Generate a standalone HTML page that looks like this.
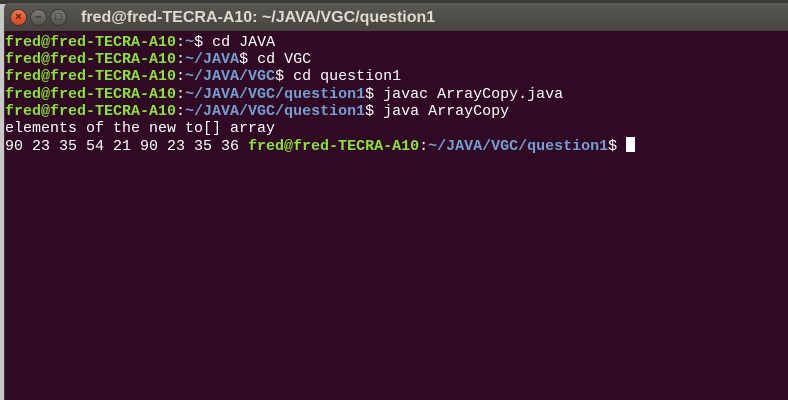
<!DOCTYPE html>
<html><head><style>
body{margin:0;width:788px;height:400px;overflow:hidden;background:#c8c8c6;position:relative;font-family:"Liberation Mono",monospace}
.top{position:absolute;left:0;top:0;width:788px;height:4px;background:#3a3935}
.title{position:absolute;left:4px;top:3px;width:784px;height:28px;background:linear-gradient(#5a5852,#45443e);border-radius:5px 0 0 0}
.btn{position:absolute;top:6px;width:17px;height:17px;border-radius:50%;background:linear-gradient(#7a7872,#55544f);border:1px solid #3a3935;box-sizing:border-box;color:#2e2d2a;font:bold 11px/15px "Liberation Sans",sans-serif;text-align:center}
.ttext{position:absolute;left:77px;top:6px;color:#dfdbd2;font:bold 16px/18px "Liberation Sans",sans-serif;white-space:nowrap}
.term{position:absolute;left:4px;top:31px;width:784px;height:369px;background:#300a24;border-left:1px solid #4a2a40;box-sizing:border-box}
pre{margin:0;position:absolute;left:0px;top:3px;font:15px/17.2px "Liberation Mono",monospace;color:#fff;letter-spacing:0}
.g{color:#8ae234;font-weight:bold}.b{color:#729fcf;font-weight:bold}
.cur{display:inline-block;width:9px;height:15px;background:#fff;vertical-align:-2px}
</style></head><body>
<div class="top"></div>
<div class="title">
<div class="btn" style="left:6px;background:linear-gradient(#f07650,#d9461c);color:#5a1a08">×</div>
<div class="btn" style="left:26px">–</div>
<div class="btn" style="left:46px">□</div>
<div class="ttext">fred@fred-TECRA-A10: ~/JAVA/VGC/question1</div>
</div>
<div class="term"><pre><span class="g">fred@fred-TECRA-A10</span>:<span class="b">~</span>$ cd JAVA
<span class="g">fred@fred-TECRA-A10</span>:<span class="b">~/JAVA</span>$ cd VGC
<span class="g">fred@fred-TECRA-A10</span>:<span class="b">~/JAVA/VGC</span>$ cd question1
<span class="g">fred@fred-TECRA-A10</span>:<span class="b">~/JAVA/VGC/question1</span>$ javac ArrayCopy.java
<span class="g">fred@fred-TECRA-A10</span>:<span class="b">~/JAVA/VGC/question1</span>$ java ArrayCopy
elements of the new to[] array
90 23 35 54 21 90 23 35 36 <span class="g">fred@fred-TECRA-A10</span>:<span class="b">~/JAVA/VGC/question1</span>$ <span class="cur"></span></pre></div>
</body></html>
